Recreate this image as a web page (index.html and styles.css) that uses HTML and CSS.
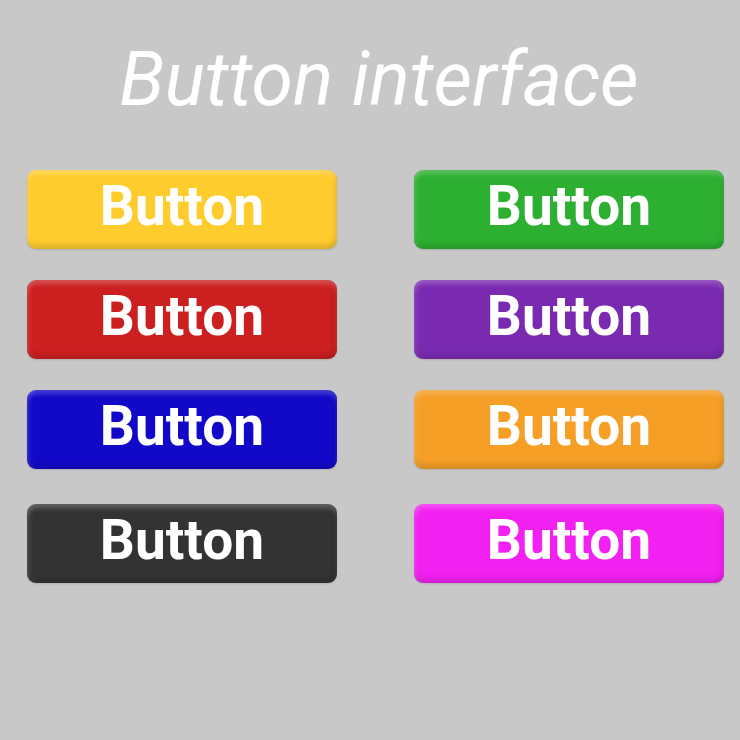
FILE: index.html
```html
<!DOCTYPE html>
<html lang="en">
<head>
<meta charset="utf-8">
<title>Button interface</title>
<link rel="stylesheet" href="styles.css">
</head>
<body>
<main class="page">
  <h1 class="title">Button interface</h1>
  <div class="grid">
    <button class="btn btn-yellow">Button</button>
    <button class="btn btn-green">Button</button>
    <button class="btn btn-red">Button</button>
    <button class="btn btn-purple">Button</button>
    <button class="btn btn-blue">Button</button>
    <button class="btn btn-orange">Button</button>
    <button class="btn btn-dark last">Button</button>
    <button class="btn btn-magenta last">Button</button>
  </div>
</main>
</body>
</html>
```
FILE: styles.css
```css
html, body {
  margin: 0;
  padding: 0;
  background: #c8c8c8;
}

.page {
  width: 740px;
  height: 740px;
  box-sizing: border-box;
  padding-top: 37px;
  font-family: Roboto, "Liberation Sans", sans-serif;
}

.title {
  margin: 0;
  text-align: center;
  padding-left: 18px;
  font-size: 75px;
  line-height: 84px;
  font-style: italic;
  font-weight: 400;
  color: #ffffff;
}

.grid {
  display: grid;
  grid-template-columns: 310px 310px;
  column-gap: 77px;
  row-gap: 31px;
  padding-left: 27px;
  margin-top: 49px;
}

.btn {
  height: 79px;
  border: none;
  border-radius: 9px;
  padding: 0 0 6px;
  font-family: Roboto, "Liberation Sans", sans-serif;
  font-weight: 700;
  font-size: 55px;
  line-height: 1;
  color: #ffffff;
  box-shadow:
    inset 0 5px 5px -1px rgba(255, 255, 255, 0.22),
    inset 5px 0 6px -3px rgba(255, 255, 255, 0.12),
    inset -5px 0 6px -3px rgba(0, 0, 0, 0.08),
    inset 0 -6px 6px -2px rgba(0, 0, 0, 0.14),
    0 1px 2px rgba(0, 0, 0, 0.12);
}

.last {
  margin-top: 4px;
}

.btn-yellow { background: #ffcc2e; }
.btn-green { background: #2db031; }
.btn-red { background: #cc1f20; }
.btn-purple { background: #7a2ab0; }
.btn-blue { background: #1208c8; }
.btn-orange { background: #f59f26; }
.btn-dark { background: #333333; }
.btn-magenta { background: #f220f0; }
```
